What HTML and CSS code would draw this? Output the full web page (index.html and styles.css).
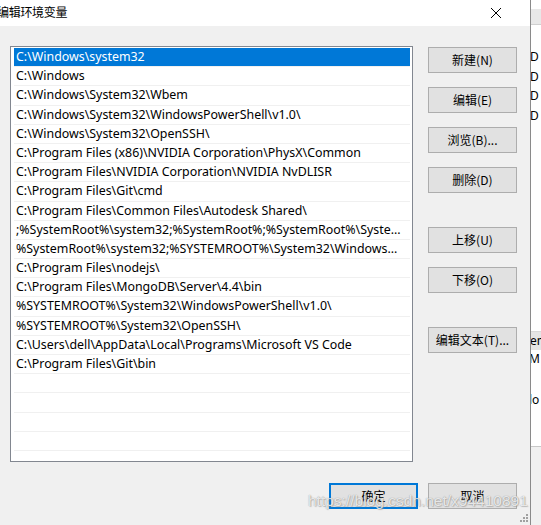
FILE: index.html
```html
<!DOCTYPE html>
<html lang="zh-CN">
<head>
<meta charset="utf-8">
<title>编辑环境变量</title>
<link rel="stylesheet" href="styles.css">
</head>
<body>
<div class="screen">
  <div class="dialog">
    <div class="titlebar">
      <span class="title">编辑环境变量</span>
      <svg class="close" width="12" height="12" viewBox="0 0 12 12"><path d="M1 1 L11 11 M11 1 L1 11" stroke="#000" stroke-width="1" fill="none"/></svg>
    </div>
    <div class="body">
      <div class="main">
        <div class="list">
          <div class="row sel">C:\Windows\system32</div>
          <div class="row">C:\Windows</div>
          <div class="row">C:\Windows\System32\Wbem</div>
          <div class="row">C:\Windows\System32\WindowsPowerShell\v1.0\</div>
          <div class="row">C:\Windows\System32\OpenSSH\</div>
          <div class="row">C:\Program Files (x86)\NVIDIA Corporation\PhysX\Common</div>
          <div class="row">C:\Program Files\NVIDIA Corporation\NVIDIA NvDLISR</div>
          <div class="row">C:\Program Files\Git\cmd</div>
          <div class="row">C:\Program Files\Common Files\Autodesk Shared\</div>
          <div class="row">;%SystemRoot%\system32;%SystemRoot%;%SystemRoot%\Syste...</div>
          <div class="row">%SystemRoot%\system32;%SYSTEMROOT%\System32\Windows...</div>
          <div class="row">C:\Program Files\nodejs\</div>
          <div class="row">C:\Program Files\MongoDB\Server\4.4\bin</div>
          <div class="row">%SYSTEMROOT%\System32\WindowsPowerShell\v1.0\</div>
          <div class="row">%SYSTEMROOT%\System32\OpenSSH\</div>
          <div class="row">C:\Users\dell\AppData\Local\Programs\Microsoft VS Code</div>
          <div class="row">C:\Program Files\Git\bin</div>
          <div class="row"></div>
          <div class="row"></div>
          <div class="row"></div>
          <div class="row"></div>
          <div class="row"></div>
          <div class="row"></div>
        </div>
        <div class="buttons">
          <div class="group">
            <button class="btn">新建(N)</button>
            <button class="btn">编辑(E)</button>
            <button class="btn">浏览(B)...</button>
            <button class="btn">删除(D)</button>
          </div>
          <div class="group">
            <button class="btn">上移(U)</button>
            <button class="btn">下移(O)</button>
          </div>
          <div class="group">
            <button class="btn">编辑文本(T)...</button>
          </div>
        </div>
      </div>
      <div class="footer">
        <button class="btn default">确定</button>
        <button class="btn">取消</button>
      </div>
      <svg class="grip" width="10" height="10" viewBox="0 0 10 10">
        <rect x="7" y="1" width="2" height="2" fill="#a0a0a0"/>
        <rect x="4" y="4" width="2" height="2" fill="#a0a0a0"/>
        <rect x="7" y="4" width="2" height="2" fill="#a0a0a0"/>
        <rect x="1" y="7" width="2" height="2" fill="#a0a0a0"/>
        <rect x="4" y="7" width="2" height="2" fill="#a0a0a0"/>
        <rect x="7" y="7" width="2" height="2" fill="#a0a0a0"/>
      </svg>
    </div>
  </div>
  <div class="edge"></div>
  <div class="behind">
    <div class="b-top"></div>
    <div class="b-bar"></div>
    <div class="b-rows">
      <div class="b-row">D</div>
      <div class="b-row">D</div>
      <div class="b-row">D</div>
      <div class="b-row">D</div>
    </div>
    <div class="b-mid"></div>
    <div class="b-head">em</div>
    <div class="b-row2">M</div>
    <div class="b-gap"></div>
    <div class="b-row2">lo</div>
    <div class="b-fill"></div>
    <div class="b-bottom"></div>
  </div>
  <div class="watermark">https://blog.csdn.net/x94410891</div>
</div>
</body>
</html>
```

FILE: styles.css
```css
* { box-sizing: border-box; }
html, body { margin: 0; padding: 0; }
body {
  width: 541px;
  height: 525px;
  overflow: hidden;
  background: #f0f0f0;
  font-family: "Noto Sans", "Noto Sans CJK SC", sans-serif;
  font-size: 12px;
  color: #000;
}
.screen {
  position: relative;
  display: flex;
  width: 541px;
  height: 525px;
}
.dialog {
  width: 530px;
  height: 525px;
  display: flex;
  flex-direction: column;
  background: #f0f0f0;
}
.titlebar {
  height: 26px;
  background: #fff;
  display: flex;
  align-items: center;
  justify-content: space-between;
  padding-right: 28px;
}
.title {
  margin-left: -3px;
  font-family: "Noto Sans CJK SC", sans-serif;
  font-size: 12px;
  color: #000;
  letter-spacing: -0.3px;
  line-height: 1;
  margin-top: -2px;
}
.close { display: block; margin-top: -1px; }
.body {
  position: relative;
  flex: 1;
  padding: 20px 13px 0 10px;
}
.main {
  display: flex;
  gap: 15px;
  align-items: flex-start;
}
.list {
  width: 403px;
  height: 416px;
  background: #fff;
  border: 1px solid #828790;
  padding: 1px 2px 0 3px;
  overflow: hidden;
}
.row {
  height: 19.2px;
  line-height: 18.2px;
  border-bottom: 1px solid #f0f0f0;
  padding-left: 2px;
  white-space: nowrap;
  overflow: hidden;
  font-family: "Noto Sans", sans-serif;
  font-size: 12.4px;
  letter-spacing: 0;
}
.row.sel {
  background: #0078d7;
  color: #fff;
}
.buttons {
  display: flex;
  flex-direction: column;
  gap: 34px;
  padding-top: 1px;
}
.group {
  display: flex;
  flex-direction: column;
  gap: 14px;
}
.btn {
  width: 89px;
  height: 26px;
  margin: 0;
  padding: 0;
  background: #e1e1e1;
  border: 1px solid #adadad;
  font-family: "Noto Sans CJK SC", sans-serif;
  font-size: 12px;
  color: #000;
  line-height: 1;
}
.btn.default {
  border: 1px solid #0078d7;
  box-shadow: inset 0 0 0 1px #0078d7;
}
.footer {
  display: flex;
  justify-content: flex-end;
  gap: 10px;
  margin-top: 21px;
}
.grip {
  position: absolute;
  right: 1px;
  bottom: 2px;
}
.edge {
  width: 1px;
  height: 525px;
  background: #8a8a8a;
}
.behind {
  width: 10px;
  height: 525px;
  display: flex;
  flex-direction: column;
  background: #f0f0f0;
  overflow: hidden;
  font-family: "Noto Sans", sans-serif;
  font-size: 12px;
}
.b-top { height: 9px; background: #fff; }
.b-bar { height: 16px; background: #e8e8e8; border-bottom: 1px solid #d0d0d0; }
.b-rows { background: #fff; padding-top: 22px; }
.b-row { height: 19.5px; line-height: 19.5px; margin-left: -1px; }
.b-mid { height: 207px; background: #fff; border-bottom: 1px solid #d9d9d9; }
.b-head { height: 18px; line-height: 18px; background: #e5e5e5; margin-left: -1px; }
.b-row2 { height: 18px; line-height: 18px; background: #fff; margin-left: -2px; }
.b-gap { height: 23px; background: #fff; }
.b-fill { height: 38px; background: #fff; border-bottom: 1px solid #c8c8c8; }
.b-bottom { flex: 1; background: #f0f0f0; }
.watermark {
  position: absolute;
  left: 308px;
  top: 492px;
  font-family: "Liberation Sans", sans-serif;
  font-size: 15.5px;
  color: rgba(255, 255, 255, 0.8);
  text-shadow: 0 0 1px rgba(110, 110, 110, 0.8), 1px 1px 1px rgba(150, 150, 150, 0.5);
  white-space: nowrap;
  letter-spacing: 0;
}
```
